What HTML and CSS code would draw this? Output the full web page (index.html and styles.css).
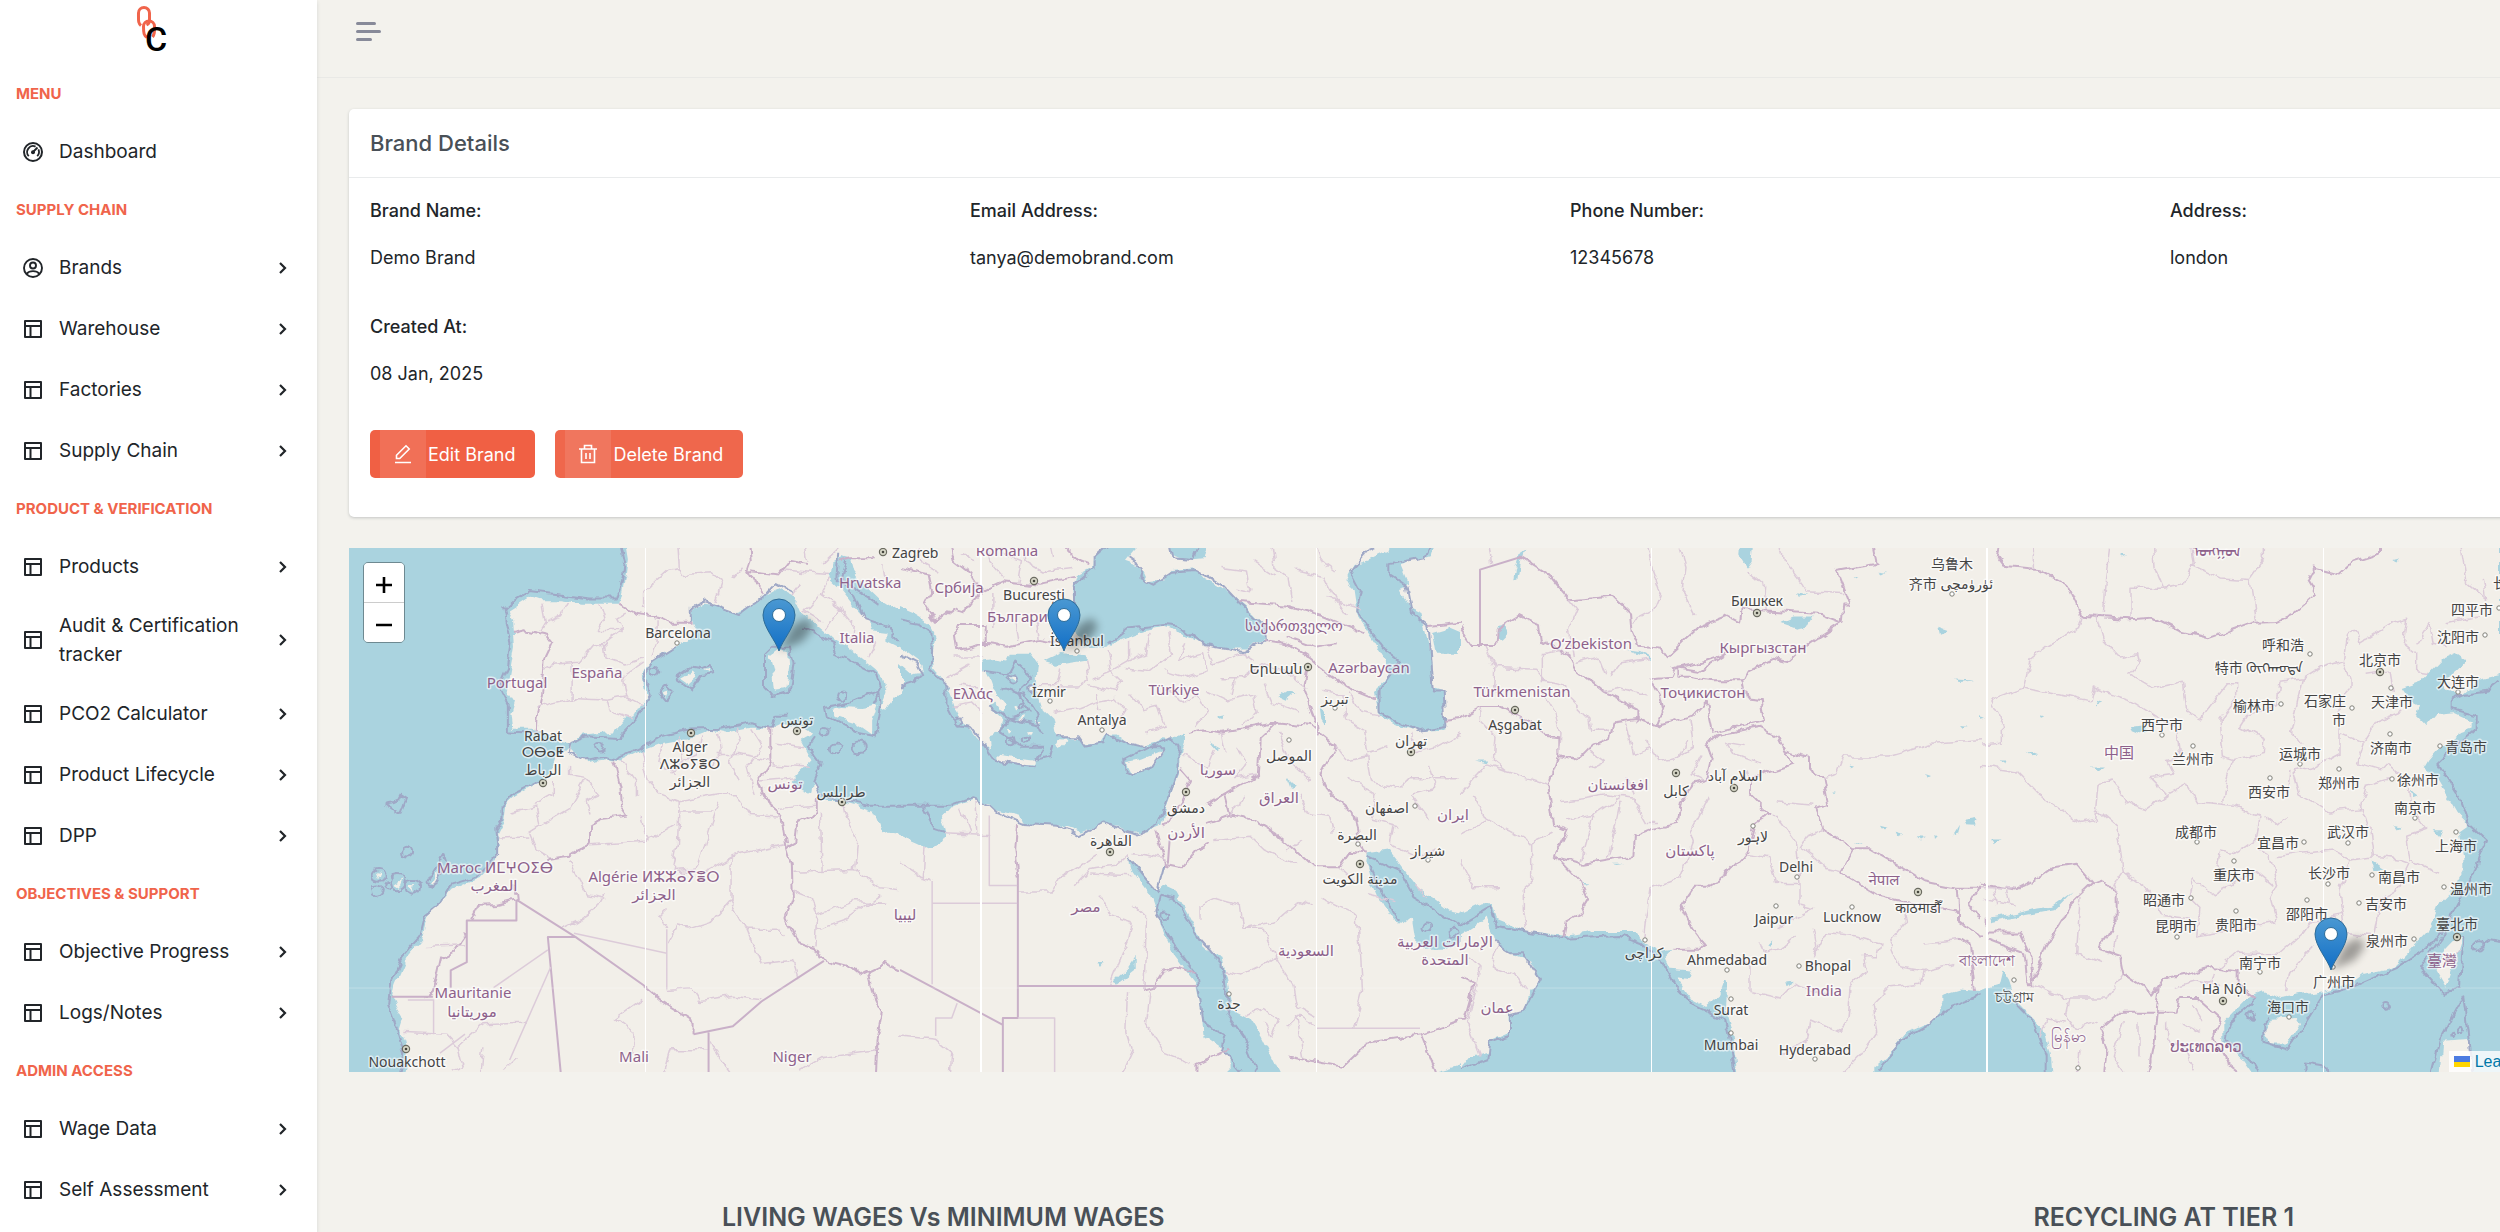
FILE: index.html
```html
<!DOCTYPE html>
<html lang="en">
<head>
<meta charset="utf-8">
<title>Brand Details</title>
<link rel="stylesheet" href="styles.css">
</head>
<body>
<svg class="defs" aria-hidden="true">
  <symbol id="i-layout" viewBox="0 0 24 24"><path d="M4 4h16v16H4zM4 9h16M9.500 9v11" fill="none" stroke="currentColor" stroke-width="2" stroke-linejoin="round"/></symbol>
  <symbol id="i-dash" viewBox="0 0 24 24"><g fill="none" stroke="currentColor"><circle cx="12" cy="12" r="9" stroke-width="2"/><path d="M7.800 16.200A6 6 0 0 1 14.600 6.600M17.400 9.400a6 6 0 0 1-1.200 6.800" stroke-width="1.800"/><path d="M12 12l4.500-4.500" stroke-width="1.800"/></g><circle cx="12" cy="12.200" r="2" fill="currentColor"/></symbol>
  <symbol id="i-user" viewBox="0 0 24 24"><g fill="none" stroke="currentColor" stroke-width="1.900"><circle cx="12" cy="12" r="9"/><circle cx="12" cy="9.500" r="3"/><path d="M5.500 17.800c3-3.600 10-3.600 13 0"/></g></symbol>
  <symbol id="i-chev" viewBox="0 0 12 14"><path d="M3 2l5 5-5 5" fill="none" stroke="currentColor" stroke-width="2.200"/></symbol>
</svg>
<div class="app">
  <aside class="sidebar">
    <a class="logo" href="#" aria-label="Home">
      <svg width="34" height="56" viewBox="0 0 34 56"><g fill="none" stroke="#f0644b" stroke-width="3"><path d="M7 25.500C4 23 4.500 21 4.500 13a5.500 5.500 0 0 1 11 0v7.500c0 2-1 3.500-3 4.500"/><path d="M13 37.500c-3-2-3.500-4-3.500-11a5.500 5.500 0 0 1 11 0c0 6 0 8-2 10.500"/></g><text class="logo-c" x="11" y="51">C</text></svg>
    </a>
    <nav>
      <h2>MENU</h2>
      <ul>
        <li><a href="#"><svg class="ic"><use href="#i-dash"/></svg><span>Dashboard</span></a></li>
      </ul>
      <h2>SUPPLY CHAIN</h2>
      <ul>
        <li><a href="#"><svg class="ic"><use href="#i-user"/></svg><span>Brands</span><svg class="chev"><use href="#i-chev"/></svg></a></li>
        <li><a href="#"><svg class="ic"><use href="#i-layout"/></svg><span>Warehouse</span><svg class="chev"><use href="#i-chev"/></svg></a></li>
        <li><a href="#"><svg class="ic"><use href="#i-layout"/></svg><span>Factories</span><svg class="chev"><use href="#i-chev"/></svg></a></li>
        <li><a href="#"><svg class="ic"><use href="#i-layout"/></svg><span>Supply Chain</span><svg class="chev"><use href="#i-chev"/></svg></a></li>
      </ul>
      <h2>PRODUCT &amp; VERIFICATION</h2>
      <ul>
        <li><a href="#"><svg class="ic"><use href="#i-layout"/></svg><span>Products</span><svg class="chev"><use href="#i-chev"/></svg></a></li>
        <li><a href="#"><svg class="ic"><use href="#i-layout"/></svg><span>Audit &amp; Certification tracker</span><svg class="chev"><use href="#i-chev"/></svg></a></li>
        <li><a href="#"><svg class="ic"><use href="#i-layout"/></svg><span>PCO2 Calculator</span><svg class="chev"><use href="#i-chev"/></svg></a></li>
        <li><a href="#"><svg class="ic"><use href="#i-layout"/></svg><span>Product Lifecycle</span><svg class="chev"><use href="#i-chev"/></svg></a></li>
        <li><a href="#"><svg class="ic"><use href="#i-layout"/></svg><span>DPP</span><svg class="chev"><use href="#i-chev"/></svg></a></li>
      </ul>
      <h2>OBJECTIVES &amp; SUPPORT</h2>
      <ul>
        <li><a href="#"><svg class="ic"><use href="#i-layout"/></svg><span>Objective Progress</span><svg class="chev"><use href="#i-chev"/></svg></a></li>
        <li><a href="#"><svg class="ic"><use href="#i-layout"/></svg><span>Logs/Notes</span><svg class="chev"><use href="#i-chev"/></svg></a></li>
      </ul>
      <h2>ADMIN ACCESS</h2>
      <ul>
        <li><a href="#"><svg class="ic"><use href="#i-layout"/></svg><span>Wage Data</span><svg class="chev"><use href="#i-chev"/></svg></a></li>
        <li><a href="#"><svg class="ic"><use href="#i-layout"/></svg><span>Self Assessment</span><svg class="chev"><use href="#i-chev"/></svg></a></li>
      </ul>
    </nav>
  </aside>
  <div class="content">
    <header class="topbar">
      <button class="burger" type="button" aria-label="Toggle menu"><span></span><span></span><span></span></button>
    </header>
    <main>
      <section class="card">
        <h1>Brand Details</h1>
        <div class="card-body">
          <dl class="fields">
            <div><dt>Brand Name:</dt><dd>Demo Brand</dd></div>
            <div><dt>Email Address:</dt><dd>tanya@demobrand.com</dd></div>
            <div><dt>Phone Number:</dt><dd>12345678</dd></div>
            <div><dt>Address:</dt><dd>london</dd></div>
            <div><dt>Created At:</dt><dd>08 Jan, 2025</dd></div>
          </dl>
          <div class="actions">
            <button class="btn" type="button"><span class="btn-icon"><svg width="20" height="20" viewBox="0 0 20 20" fill="none" stroke="#fff" stroke-width="1.600"><path d="M2 18.500h16M3.500 14.500v-3.200L13 1.800l3.200 3.200-9.500 9.500z"/></svg></span>Edit Brand</button>
            <button class="btn btn-soft" type="button"><span class="btn-icon"><svg width="20" height="20" viewBox="0 0 20 20" fill="none" stroke="#fff" stroke-width="1.600"><path d="M1 5h18M3.500 5v13.500h13V5M6.500 5V1.500h7V5M8 9v6M12 9v6"/></svg></span>Delete Brand</button>
          </div>
        </div>
      </section>

      <section class="map" aria-label="Map">
        <svg class="map-canvas" viewBox="0 0 2410 524" preserveAspectRatio="xMinYMin slice">
          <defs>
            <filter id="rough" x="0" y="0" width="100%" height="100%"><feTurbulence type="fractalNoise" baseFrequency="0.07" numOctaves="3" seed="4" result="n"/><feDisplacementMap in="SourceGraphic" in2="n" scale="9" xChannelSelector="R" yChannelSelector="G"/></filter>
            <filter id="soft" x="-50%" y="-50%" width="200%" height="200%"><feGaussianBlur stdDeviation="4"/></filter>
            <linearGradient id="pinfill" x1="0" y1="0" x2="0" y2="1"><stop offset="0" stop-color="#4a98d2"/><stop offset="1" stop-color="#126fc6"/></linearGradient>
            <g id="pin">
              <path d="M0 0L14-26 28-33 34-24 24-10z" fill="#000" opacity=".35" filter="url(#soft)"/>
              <path d="M0 0C-3-10-16-24-16-36a16 16 0 0 1 32 0C16-24 3-10 0 0z" fill="url(#pinfill)" stroke="#2e6c97" stroke-width="1"/>
              <circle cy="-36" r="6.500" fill="#fff" stroke="#2e6c97" stroke-width="1"/>
            </g>
            <g id="cap"><circle r="3.600" fill="#d8d8c8" stroke="#6b6b60" stroke-width="1.200"/><circle r="1.300" fill="#44443c"/></g>
            <circle id="town" r="2.200" fill="#fff" stroke="#7f7f78" stroke-width="1"/>
          </defs>
          <rect class="sea" x="-10" y="-10" width="2440" height="560"/>
          <g filter="url(#rough)">
            <svg x="-9" y="-8" width="560" height="540" viewBox="0 0 1568 1568" preserveAspectRatio="none">
              <g class="land">
                <path d="M798 0L806 50 800 100 790 150 782 185 730 185 680 185 620 175 560 175 530 165 500 185 470 205 485 230 487 275 490 310 480 370 470 430 465 455 490 465 480 500 485 545 540 545 575 560 610 585 640 590 680 565 740 560 770 555 800 520 825 510 840 480 865 455 850 430 845 395 870 360 910 325 960 300 1000 260 985 225 990 195 1020 185 1060 190 1110 210 1150 195 1190 160 1225 140 1260 160 1285 190 1295 215 1330 245 1380 290 1420 310 1470 350 1500 375 1520 400 1530 440 1515 480 1530 490 1550 460 1570 440V310L1530 290 1530 270 1490 265 1480 235 1440 190 1410 150 1370 110 1375 70 1410 45 1430 50 1440 90 1470 130 1510 170 1570 210V0z"/>
                <path d="M570 700L540 715 490 745 465 770 460 810 440 850 445 890 430 940 395 980 310 1015 275 1060 245 1090 230 1160 185 1215 155 1290 145 1325 160 1360 175 1385 165 1420 180 1450 190 1500 175 1570H1570V855L1540 850 1510 830 1495 790 1440 770 1390 755 1340 755 1325 700 1320 740 1280 720 1265 700 1290 670 1320 640 1300 600 1290 580 1325 560 1300 545 1240 535 1220 545 1150 545 1080 560 1040 550 980 575 900 590 850 610 790 640 750 635 690 645 650 620 640 600 610 630 600 660z"/>
                <path d="M1200 340L1230 315 1255 320 1258 370 1250 430 1215 435 1210 380zM1378 490L1400 485 1460 488 1505 480 1490 530 1490 565 1450 535 1390 515zM955 400L985 382 1000 400 980 418zM903 440L920 434 912 452zM1012 376L1035 376 1030 386zM150 1000L175 985 165 1010zM195 1005L210 1005 205 1025zM255 1000L275 960 278 975 262 1005zM100 968L112 970 107 985z"/>
              </g>
              <path class="mar" d="M785 0L798 60 790 120 775 170 700 170 610 158 530 148 490 172 460 200 470 250 480 300 470 370 445 430 470 480 470 555 530 560 570 550M640 590L635 620 680 640 740 628 780 635 850 600 900 570 980 550 1060 548 1150 532 1210 545 1220 510 1250 510M640 590L690 570 780 575 830 520 870 450 850 400 880 350 940 310M985 240L985 195 1020 178 1120 215 1190 160 1220 125 1265 150M1300 255L1380 300 1390 330 1500 385 1515 430 1490 480M1415 60L1400 110 1470 160 1510 190M1395 40L1390 110 1440 160 1470 230 1530 250 1568 290M1330 570L1310 600 1345 650 1325 700 1340 740 1480 772 1568 772M560 700L490 735 455 775 455 810 435 840 440 880 440 910 390 975 310 1000 275 1060 240 1090 225 1150 175 1210 140 1290 135 1350 160 1420 180 1490 160 1568M1190 330L1210 310 1260 310 1270 360 1260 440 1210 455 1190 430zM1355 485L1440 470 1510 440 1515 480 1500 570 1450 560 1360 510zM940 400L980 370 1010 375 1035 365 1045 390 1010 395 985 435zM895 440L915 420 935 440 915 465zM125 765L160 760 170 740 185 750 170 795zM240 1000L290 915 298 940 260 1010z"/>
              <g class="mar"><circle cx="882" cy="386" r="12"/><circle cx="188" cy="905" r="14"/><circle cx="108" cy="975" r="17"/><circle cx="102" cy="1021" r="15"/><circle cx="133" cy="1003" r="12"/><circle cx="162" cy="992" r="22"/><circle cx="204" cy="1010" r="20"/><circle cx="1355" cy="556" r="13"/><circle cx="1388" cy="608" r="14"/><circle cx="1455" cy="602" r="17"/><circle cx="1405" cy="453" r="13"/><circle cx="728" cy="603" r="11"/></g>
              <path class="bord" d="M782 185L830 215 900 225 930 240 990 240M485 270L520 262 580 275 595 295 570 350 565 430 550 520 548 550M765 640L785 720 790 770 810 800 730 810 700 830 700 880 640 920 580 930M1205 545L1205 640 1170 700 1200 770 1235 800 1250 890 1265 940 1268 1040 1250 1095 1280 1170 1335 1190 1355 1222M1335 755L1335 790 1280 820 1275 880 1250 895M1145 0L1150 60 1140 90 1160 130 1185 155M1140 90L1230 100 1260 60 1310 70M1400 60L1430 50 1500 50M490 1000L495 1045 440 1060 390 1062 370 1104M352 1140L315 1195 280 1215 260 1310 240 1325M850 1295L905 1345 960 1380 990 1400 990 1435M1355 1222L1420 1240 1450 1265 1480 1250 1525 1228 1568 1250M1480 1250L1500 1340 1520 1375 1505 1450 1500 1568"/>
              <path class="reg" d="M565 185L575 240 560 265M640 185L620 220 580 235M725 185L740 230 720 260 790 260 775 230 800 215M790 260L740 300 710 305 670 355 600 360 570 370M740 300L745 340 800 360 850 345M650 360L650 460 610 470 550 485M650 460L750 465 800 455 850 480M750 465L760 500 820 520M800 455L790 400 845 360M885 230L885 300 870 340M850 150L920 85 950 80 960 100 1040 95 1070 120 1050 180M850 150L850 200M950 80L945 0M1100 110L1130 75M1240 90L1370 100M1260 160L1290 120M1340 160L1300 210 1350 240M1370 110L1345 160 1400 200 1360 260M1400 200L1440 250 1430 300M1500 300L1480 340M640 650L640 680 690 690 730 740 690 760 700 800M600 700L600 740 550 770 480 790M550 770L560 830 530 850 550 900 590 925M445 868L530 865M690 690L640 780 560 830M790 640L830 700 830 740M840 610L860 700 900 740 950 760M900 590L890 650 940 680M950 570L960 640 920 680M1010 570L1000 620 960 640M1060 560L1070 620 1040 660M1110 545L1120 590 1090 640 1120 700M1150 550L1180 600 1140 660 1160 740M1205 640L1120 620 1060 620M1220 590L1300 600M1205 650L1310 660M1175 700L1280 690M1225 780L1330 770M950 760L1060 740 1110 740 1150 800 1235 805M950 760L945 880 930 960 1000 955 1040 820 1060 760M950 790L1040 790M700 885L860 875 940 825M840 800L850 850 870 875M940 965L1020 965 1095 920 1245 885M1095 920L1095 1050 1140 1130 1230 1130 1250 1150M1095 1045L1040 1110 980 1130 940 1120 915 1165M740 1030L720 1070 660 1110 620 1130M640 935L690 1030 740 1040M920 1070L895 1095 915 1130M915 1305L985 1300 1010 1340 1100 1325 1180 1335M1140 1130L1180 1230 1270 1220 1285 1270M1345 790L1350 960M1410 760L1415 790 1450 870 1440 960 1270 965M1440 960L1510 1010 1568 1015M1270 1020L1320 1040 1335 1090 1330 1180M1335 1090L1440 1050 1530 1055M235 1180L350 1175M1335 1130L1420 1100 1510 1030M180 1430L300 1435 330 1470 400 1405 520 1400M330 1470L345 1530 310 1545M400 1470L390 1568M500 1500L460 1540M770 1390L850 1330M770 1390L820 1430 820 1490M910 1550L930 1480 1030 1480M1040 1450L1060 1500 1110 1568M1280 1545L1355 1500 1505 1480M1300 0L1310 60M1350 70L1400 20M1520 70L1530 140"/>
            </svg>
            <svg x="551" y="-8" width="560" height="540" viewBox="0 0 1568 1568" preserveAspectRatio="none">
              <rect class="land" x="-5" width="1580" height="1568"/>
              <g class="water">
                <path d="M-5 195L40 215 80 240 100 280 90 330 95 375 130 420 150 470 165 520 195 545 215 575 235 590 255 610 250 570 280 560 290 520 250 480 270 470 290 500 300 480 260 430 250 400 235 370 230 350 265 345 300 350 310 330 370 330 385 350 380 400 385 440 400 490 430 520 440 570 500 575 520 595 560 590 575 565 610 565 640 590 680 600 720 590 740 570 780 575 795 555 795 590 785 620 785 670 765 720 745 780 735 830 700 845 650 850 610 830 560 825 505 850 450 830 345 825 335 800 265 785 250 765 200 755 150 775 120 810 130 850 110 885 80 895 50 880-5 855z"/>
                <path d="M400 350L450 325 520 335 520 350 440 362zM490 200L485 140 495 105 540 80 545 50 590 0 680 0 650 35 630 60 670 75 690 120 740 115 760 90 830 85 850 110 900 140 950 180 990 215 1020 250 1025 285 970 315 900 315 850 305 790 270 740 255 680 265 620 290 580 310 520 315 500 290 485 250zM750 0L870 0 850 50 800 55 755 40z"/>
                <path d="M1270 70L1310 60 1370 30 1380 0 1500 0 1490 40 1430 60 1400 70 1420 120 1400 150 1430 200 1460 215 1490 350 1495 430 1525 440 1530 550 1450 555 1400 540 1340 510 1330 440 1340 420 1365 400 1360 350 1330 300 1280 220 1270 150 1250 110zM1490 270L1540 255 1575 270 1575 330 1500 330z"/>
                <path d="M640 920L660 940 720 1020 740 1000 770 1015 810 1090 840 1150 850 1185 900 1210 915 1280 925 1360 980 1390 1010 1440 1070 1568 920 1568 920 1510 905 1480 850 1440 845 1380 830 1290 770 1210 730 1120 700 1030 650 960zM1310 910L1370 900 1400 940 1450 1010 1500 1040 1550 1080 1575 1085 1575 1170 1520 1190 1470 1190 1440 1160 1430 1095 1400 1120 1380 1100 1340 1040 1320 990 1305 940zM1500 1545L1575 1520V1568H1490z"/>
                <path d="M1060 460L1090 440 1110 445 1080 470zM1175 480L1190 500 1190 535 1180 520zM1085 690L1105 710 1095 720zM550 1225L570 1225 560 1240zM600 1280L640 1240 660 1210 660 1245 610 1285zM890 510L915 505 895 520zM870 590L895 605 885 610z"/>
              </g>
              <path class="land" d="M-5 310L60 360 65 385 40 390-5 350zM-5 395L12 420-5 445zM270 625L330 635 380 640 380 655 300 650 270 640zM630 645L680 635 740 610 710 655 670 675 645 675zM440 590L460 572 467 582 447 605zM300 400L320 395 315 410zM360 420L375 425 365 440zM330 520L350 515 345 530zM300 545L315 550 305 560zM350 560L370 555 365 570zM380 520L400 525 390 535zM320 480L335 485 325 495z"/>
              <path class="mar" d="M-5 230L50 240 85 270 90 320 85 380 130 420 130 480 160 540 200 545 240 600 265 640 310 650 380 660M-5 330L50 360 65 390 40 415-5 430M440 570L500 570 520 600 570 590 580 560 640 590 700 605 760 570 780 600 780 670 740 780 720 830 660 855 570 820 500 860 440 830 345 825 270 790 250 770 200 750 140 772-5 772M625 640L690 605 740 605 700 665 650 680 630 670zM65 775L95 835 125 845M490 190L490 130 545 80 545 50 600 0M590 300L640 260 740 250 790 255 850 305 960 325 1025 290 1020 250 950 185 900 130 830 90 760 95 710 130 670 110 680 80 640 50M750 0L760 50 820 55 840 0M1380 0L1310 30 1260 90 1290 150 1280 210 1350 310 1400 350 1340 440 1340 500 1450 555 1530 540 1525 440 1495 440 1480 250 1430 210 1415 130 1370 100 1370 70 1470 50 1490 0M640 920L720 1020 740 940M725 1030L715 1080 770 1180 830 1260 850 1400 910 1440 900 1480 950 1540M725 1030L770 1040 840 1160 900 1230 920 1380 960 1440 1010 1568M1310 920L1400 960 1440 1040 1568 1120M1310 940L1350 1030 1400 1110M240 380L300 390 320 350 370 400 330 440 360 500 300 520 280 560 340 600 400 600 380 640 420 630 430 590M290 430L350 450 380 500 400 560M250 480L310 520 400 540"/>
              <g class="mar"><circle cx="740" cy="1090" r="11"/><circle cx="1474" cy="1122" r="11"/><circle cx="165" cy="530" r="12"/><circle cx="342" cy="483" r="7"/><circle cx="310" cy="585" r="11"/><circle cx="350" cy="580" r="9"/><circle cx="310" cy="405" r="12"/><circle cx="370" cy="430" r="11"/><circle cx="1550" cy="1140" r="11"/></g>
              <path class="bord" d="M-5 80L80 100 90 150 70 190 100 240 150 200 180 210 200 180 230 150 200 100 150 60 140 0M150 250L240 250 240 300 160 320 150 250M230 300L300 310 390 290 440 300M230 150L290 120 390 130 490 110M460 0L480 50 530 70M810 560L850 550 900 560 960 550 1060 530 1150 540 1220 600 1180 680 1200 730 1270 790 1285 870 1300 910M1140 380L1130 430 1160 510 1170 570M1020 290L1080 300 1140 340 1200 390 1260 430 1330 460M950 180L1080 190 1180 220 1300 270M1080 280L1160 310 1220 300M1060 530L1010 580 1005 680 860 770M790 670L815 700 790 760 740 830M910 740L925 800 860 825M925 800L980 810 1060 860 1160 950 1230 950 1260 905 1310 910M870 880L830 900 790 950 745 940 720 845M680 1310L710 1300 740 1250 780 1240 830 1260M325 825L320 900 330 980M1090 1500L1240 1530 1310 1460 1460 1435 1568 1395M1460 1435L1510 1568M830 1568L830 1525 920 1480M1480 250L1568 240M1530 525L1568 520"/>
              <path class="reg" d="M50 0L60 60 110 90M240 0L250 60 290 110M290 40L340 60 330 120M340 0L350 60 400 90 480 80M420 0L430 50M170 40L210 60M260 160L260 250M320 230L330 290M380 230L390 290M150 340L230 340M130 400L200 360M160 420L220 430M230 500L200 470 150 480M450 370L440 420 380 420M520 350L530 410 500 430 440 430M580 320L590 380 540 400M640 290L640 350 590 380 620 410 600 440 530 420M700 270L690 330 640 350M750 270L760 330 700 380 630 370M800 300L780 350 850 330 860 380 800 400 740 380M860 310L880 360 960 330 990 350M900 400L960 400 1020 360 1080 380 1140 430M430 500L500 490 550 470 600 460 630 490 600 540M550 440L560 500M640 440L680 490 720 480 740 540 690 560M740 430L800 470 830 450 860 500 830 540M860 440L920 470 990 450 1000 500 960 540M940 400L930 450M1020 420L1040 470 1120 500M900 80L970 90 980 150 940 140M1040 0L1050 80 1090 110 1100 180M990 60L1050 100M1110 90L1190 110 1220 170 1250 220M1220 90L1180 60 1160 0M1200 170L1290 200M880 610L860 660 790 620M940 600L970 650 940 690 1000 680M900 560L910 620M1060 560L1090 640 1150 700M1180 440L1240 450 1250 520 1300 550 1310 620 1370 600M1260 440L1290 500 1340 510M1220 600L1250 640 1310 630 1320 700 1400 720 1430 690 1568 690M1250 690L1330 740 1320 810 1390 830M1430 560L1440 620 1500 600 1568 560M1480 650L1500 720 1430 740 1480 810M1380 830L1370 880 1450 920 1500 900M1120 740L1140 790 1200 800 1210 850M925 800L960 740M1120 870L1080 900M880 870L980 860 1020 900 1110 940M840 1100L840 1060 880 1040 950 1060 960 1130 1050 1110 1120 1050 1150 1060M960 1130L1020 1130 1050 1210 1100 1290 1110 1350 1160 1380M905 1250L960 1260 1020 1230 1050 1210M970 1380L1020 1360 1060 1390 1040 1440 1020 1400M1080 1420L1120 1380 1160 1410M1110 1380L1130 1500M1175 1040L1280 1090 1290 1210 1295 1310 1270 1415M1440 1000L1480 1040M1310 1030L1390 1050M0 940L60 980 90 990M70 890L65 985M120 850L250 855M210 760L215 850M170 780L195 850M330 1022L430 1022 450 980 560 910M485 1010L530 960 600 950 640 910M530 970L650 975M560 1030L590 1090 650 1110 640 1160 590 1290M650 1060L690 1100 683 1310M640 1310L635 1430 650 1480 610 1568M700 1310L690 1410 740 1490 810 1520M0 1440L100 1450 145 1490 140 1568M650 910L750 930M1280 1000L1230 950"/>
            </svg>
            <svg x="1111" y="-8" width="520" height="540" viewBox="0 0 1560 1568" preserveAspectRatio="none">
              <rect class="land" x="-5" width="1570" height="1568"/>
              <g class="water">
                <path d="M-5 1085L60 1055 95 1055 110 1100 200 1135 320 1150 400 1135 530 1135 545 1165 600 1195 640 1190 615 1215 630 1245 700 1250 690 1275 650 1270 690 1330 740 1355 780 1320 795 1280 805 1290 800 1370 815 1420 835 1568-5 1568-5 1545 30 1500 85 1485 90 1455 150 1430 145 1380 190 1370 205 1320 240 1275 210 1220 150 1200 100 1170 80 1095 60 1110-5 1150zM1240 1568L1240 1530 1300 1480 1340 1430 1420 1395 1450 1340 1450 1320 1500 1305 1565 1310 1565 1568z"/>
                <path d="M965 240L1000 225 1055 225 1040 250 1010 255zM110 250L135 245 145 270 125 290 108 275zM160 120L165 80 180 40 205 25 180 60 172 118zM840 0H880L875 60 860 80 838 45zM505 320L540 325 580 345 570 345zM1435 255L1465 265 1440 275zM1005 152L1050 158 1010 162zM45 640L85 640 80 648zM1515 815L1550 810 1545 830 1520 828zM1260 830L1280 835 1265 838zM1370 860L1395 862 1380 870zM1480 860L1500 830 1495 855zM1500 540L1520 542 1508 548zM1485 405L1540 408 1500 412zM1175 108L1195 108 1185 115zM1255 92L1275 95 1265 100zM1120 730L1130 730 1125 735zM1395 680L1410 685 1400 690zM1170 652L1185 655 1178 660zM975 1282L992 1280 983 1292zM925 1180L940 1165 935 1185zM365 998L390 1000 375 1004zM455 940L490 940 470 944zM1185 875L1205 875 1195 880zM1310 850L1330 855 1315 860zM1420 855L1430 860 1422 868z"/>
              </g>
              <path class="mar" d="M-5 1120L90 1065 110 1120 320 1158 480 1150 540 1170 600 1220 640 1290 700 1350 795 1395 815 1480 830 1568M100 1170L150 1200 190 1200 240 1275 190 1370 150 1380 150 1440 90 1460 85 1510-5 1540M1565 1320L1460 1360 1400 1410 1330 1450 1250 1540"/>
              <path class="bord" d="M-5 250L35 305 105 305 110 260 150 235 175 220 240 250 245 290 330 340 350 380 430 440 535 490 535 530M180 50L270 105 330 175 460 165 510 210 515 265 535 310 600 315 620 340 720 250 800 220 840 240 845 200 1080 215 1145 240 1150 190 1170 190 1130 90 1250 70 1235 0M1145 240L1040 305 985 355 940 345 865 380 850 410 760 410 690 400 655 400 655 370 720 380 800 330 740 350 640 375 630 400 575 405 600 450 610 490 590 540 700 510 740 470 760 560 915 525 905 465 860 460 850 410M-5 520L60 485 120 485 210 530 250 565 295 570 295 630 345 640 380 605 450 575 460 530 530 520 600 545M295 630L265 710 280 830 320 845 285 915 360 990 385 1045 360 1085 320 1105 310 1155M285 920L370 940 520 915 525 860 575 840 650 825 660 760 700 710 740 700 755 640 740 600 770 570 900 545 950 570 970 610 1050 630 1050 670 1090 690 1105 770 1065 780 1090 840 1180 895 1230 895 1310 940 1390 990 1490 1010 1495 1080 1370 1055 1250 1030 1140 965 1180 895M970 610L1000 650 900 680 870 700 870 740 925 795 885 820 865 900 800 970 740 1010 700 1010 665 1060 700 1130 735 1175 720 1190 640 1190M1490 1010L1560 1010M1500 1080L1500 1110 1560 1150M1560 1100L1530 1060 1560 1010M1500 1160L1530 1180 1545 1310M-5 1265L45 1290 15 1390-5 1390"/>
              <path class="reg" d="M85 0L95 70M560 0L575 80 600 150 575 210 515 240M650 0L675 80 665 150 700 215M860 90L920 140 915 200M960 0L970 60 1040 150 1150 155M330 175L350 200 325 260 340 340M75 310L105 370 230 375 255 405 320 420 330 460 390 520 395 555 445 555M250 410L250 330 300 320M450 400L480 360 570 345M430 440L480 430 560 450M340 360L420 340 440 390M105 370L100 440M250 440L285 500 300 560 295 620M60 485L65 530 105 570 100 640 140 670 210 690 270 710M0 740L80 650 140 670M80 810L40 740M80 810L215 880 215 990 190 1010 190 1080 200 1130M0 855L80 815M215 880L280 850M0 930L40 1010 120 1010M380 605L430 640 390 660M500 530L520 620 570 600M560 580L590 640 660 630 680 580M690 520L700 600 640 640M720 620L690 680 730 700M300 760L380 750 440 740 520 750 560 820 600 820M320 810L400 800 480 750M400 800L360 935M480 760L445 920M500 690L520 740M860 600L800 590 820 620 900 650M750 740L690 850 700 880 660 980 570 1010 560 1080 550 1160M860 665L870 700M860 910L930 920 950 1000 1020 1000 1010 880 950 800 930 800M1020 890L1100 950 1140 960M1020 1000L1020 1060 1060 1070 950 1120M1090 840L1040 860 1020 890M950 760L1060 770M1060 1130L1070 1180 1060 1210 1100 1140 1190 1150 1260 1170 1250 1210 1210 1210 1220 1250 1170 1300 1160 1400 1140 1430 1050 1390 1040 1450 960 1500M900 1160L910 1200 960 1190 1010 1150M870 1240L870 1310 960 1330 1000 1290 1100 1320M810 1200L870 1240M1290 1170L1340 1110 1330 1060M1290 1170L1320 1240 1390 1250 1380 1290 1290 1300 1240 1350 1250 1430 1200 1500 1130 1568M1390 1170L1500 1160M1390 1250L1480 1230M1090 690L1130 680 1150 630 1280 630 1420 590 1560 580M30 1210L60 1240 50 1300 20 1400 60 1500M110 1180L100 1240 160 1260 200 1310"/>
            </svg>
            <svg x="1631" y="-8" width="520" height="540" viewBox="0 0 1560 1568" preserveAspectRatio="none">
              <rect class="land" x="-5" width="1575" height="1568"/>
              <g class="water">
                <path d="M-5 1310L60 1290 70 1250 90 1280 110 1340 150 1380 190 1420 210 1500 215 1568-5 1568zM1570 390L1500 405 1440 455 1410 440 1385 415 1430 380 1460 350 1430 328 1390 345 1350 385 1325 410 1265 430 1290 465 1320 480 1310 510 1340 540 1370 505 1420 500 1475 525 1475 550 1430 565 1380 600 1345 640 1330 665 1370 690 1400 740 1430 790 1470 830 1440 850 1450 920 1450 960 1420 1010 1380 1050 1360 1100 1340 1140 1290 1190 1240 1240 1150 1260 1110 1290 1030 1310 970 1320 900 1330 850 1310 800 1330 760 1370 730 1400 730 1450 780 1500 830 1568 1570 1568z"/>
                <path d="M450 540L490 535 500 555 480 565 455 555zM350 470L370 475 355 480zM335 655L375 655 360 665zM30 870L65 870 40 882zM175 515L190 518 180 522zM140 612L175 625 160 628zM0 515L15 518 0 522zM1355 840L1385 840 1375 860zM1240 825L1265 828 1250 838zM1175 930L1215 955 1180 955zM1290 730L1310 745 1295 750zM420 45L438 48 425 54zM1240 55L1260 50 1250 62zM60 640L80 640 75 650z"/>
                <path d="M30 1100L110 1085 170 1070 210 1065 275 1020 220 1075 110 1095 30 1110z"/>
              </g>
              <path class="land" d="M850 1430L880 1390 950 1385 960 1400 920 1465 870 1465zM1430 1150L1445 1155 1400 1300 1370 1250 1390 1190zM1390 1460L1465 1455 1480 1568 1380 1568z"/>
              <path class="mar" d="M1560 410L1520 440 1450 450 1415 465 1415 490 1490 510 1490 550 1440 590 1375 650 1440 750 1470 830 1515 870 1480 970 1400 1120 1350 1180 1250 1240 1110 1300 1030 1320 960 1430 920 1480 850 1460 850 1410 870 1390M830 1330L800 1360 750 1400 740 1450 830 1530 850 1568M1350 1568L1380 1450 1450 1325 1480 1568M1395 1140L1320 1240 1390 1315 1440 1300 1450 1150M970 1568L975 1520 1040 1530 1045 1568M1490 1190L1530 1165 1560 1170M100 1340L160 1400 200 1500 200 1568"/>
              <g class="mar"><circle cx="1217" cy="1357" r="10"/><circle cx="815" cy="1383" r="10"/><circle cx="1496" cy="1180" r="12"/><circle cx="1440" cy="1420" r="9"/><circle cx="1420" cy="1440" r="6"/></g>
              <path class="bord" d="M60 0L50 50 70 75 180 85 265 130 305 220 450 230 520 225 600 265 690 285 820 240 890 238 940 215 1005 160 980 120 1000 80 1080 100 1120 65 1200 40 1200 0M-5 1000L110 1015 160 990 220 950 290 940 340 995 370 985 410 1030 410 1110 360 1190 420 1210 430 1260 520 1320 550 1275 620 1260 700 1240 770 1250 770 1290 830 1330M540 1290L530 1370 590 1370 600 1330 650 1330 720 1390 700 1440 740 1520 800 1568M20 1100L20 1140 120 1140 150 1200 160 1290 140 1290 130 1200 20 1160M340 995L270 1060 250 1100 200 1180 160 1280M520 1370L420 1370 360 1420 380 1480 370 1568M530 1370L520 1470 500 1568"/>
              <path class="reg" d="M160 0L160 80M395 0L380 110 370 215M520 0L525 80 550 140M635 70L610 130 550 140 450 140 450 225M635 70L720 110 810 115 850 60 850 0M810 115L830 235M630 0L640 70M1440 0L1460 120 1520 170 1510 110M300 220L290 260 200 310 150 350 130 430 30 465 70 540 70 590 0 595M350 220L370 290 420 340 470 330 475 360 450 390 520 430 610 410 620 500 660 520 740 420 770 420 770 460 720 520 730 630 760 640M130 430L240 450 330 470 340 430 450 465 590 550 600 630 560 640 580 680 510 690 560 740 620 710 650 760 760 770 840 800 830 870 770 910 720 900 710 940 760 980M0 655L110 670 180 740 300 820 350 810 360 710 400 700 440 760 500 780 560 740M350 780L410 830 430 960 500 1010 550 1090 630 1100M430 960L400 1000 410 1030M640 980L630 1040 660 1070 650 1150 770 1130 890 1110 870 1040 890 1000 870 920 830 900M640 980L700 1030 760 1000 830 960 880 1000M720 1240L770 1200 900 1200 960 1150 990 1110M920 1310L930 1250 1000 1180M990 1110L1090 1090 1080 1020 1110 930 1060 900 960 910 890 920M1110 930L1180 920 1170 840 1150 780 1050 790 960 740 940 670 1000 660 1080 620 1080 560M760 640L850 620 855 580 780 540 800 510 890 480 900 410 970 400 1020 370 1090 350 1110 400 1110 430 1080 460 1080 560 1150 590 1190 530 1270 500M730 770L740 700 760 640M920 800L890 830 850 800M920 740L930 670M970 400L935 560 970 600M1090 350L1100 270 1130 265 1140 300 1240 240 1280 230 1270 300 1310 330 1310 380 1350 385M1160 390L1230 380 1240 440M1310 300L1350 240 1360 300 1400 310M1400 240L1500 220M1150 590L1130 650 1200 670 1220 650 1260 680M1230 690L1160 710 1140 780M1280 700L1290 780 1340 840 1280 860 1290 930 1380 970M1180 920L1260 930 1290 940 1250 1020 1200 1050 1180 1150 1100 1140 1090 1090M1440 1190L1400 1230M0 1010L110 1010M10 1040L110 1060M40 1010L50 1060M80 1015L90 1060M300 1040L290 1200 370 1230M400 1200L410 1150M430 1260L380 1330 250 1330 160 1290M270 1330L260 1380 290 1420 350 1400M180 1440L200 1390 260 1400M300 1480L290 1568M430 1400L400 1500 450 1568M480 1400L480 1500M560 1400L560 1450 610 1470 640 1540M600 1400L660 1430M640 1350L670 1400M580 1300L650 1280 720 1300M700 1260L690 1300"/>
            </svg>
          </g>
          <g class="straight">
            <svg x="-9" y="-8" width="560" height="540" viewBox="0 0 1568 1568" preserveAspectRatio="none">
              <path class="bord" d="M494 1045V1105H355V1226L310 1250V1300M145 1326H260M495 1045L660 1153H582L620 1568M660 1153L860 1300M990 1435L1100 1412 1180 1340 1355 1222M1032 1430V1568"/>
              <path class="reg" d="M582 1190L430 1300M590 1240L475 1510M190 1336H262V1435M655 1142L915 1200M915 1130V1305M280 1490L350 1435"/>
            </svg>
            <svg x="551" y="-8" width="560" height="540" viewBox="0 0 1568 1568" preserveAspectRatio="none">
              <path class="bord" d="M330 970V1388H288V1568M330 1295H830M0 1248L288 1408M750 940L755 870"/>
              <path class="reg" d="M250 800V1003H328M90 990V1290M90 1055H328M160 1345L145 1388H100V1440M330 1388H433V1568M1166 1418H1456"/>
            </svg>
            <svg x="1111" y="-8" width="520" height="540" viewBox="0 0 1560 1568" preserveAspectRatio="none"><path class="bord" d="M60 303V86L180 50"/></svg>
          </g>
          <path class="seam" d="M296.500 0V524M967.500 0V524M1302.500 0V524M1974.500 0V524"/>
          <path class="seam wide" d="M632 0V524M1638 0V524"/>
          <path class="seam-h" d="M0 440H2410"/>

          <g class="country">
            <text x="248" y="130">España</text><text x="168" y="140">Portugal</text><text x="508" y="95">Italia</text><text class="start" x="490" y="40">Hrvatska</text><text x="436" y="241">تونس</text><text x="146" y="325">Maroc ⵍⵎⵖⵔⵉⴱ</text><text x="145" y="343">المغرب</text><text x="305" y="334">Algérie ⵍⵣⵣⴰⵢⴻⵔ</text><text x="305" y="352">الجزائر</text><text x="124" y="450">Mauritanie</text><text x="123" y="469">موريتانيا</text><text x="285" y="514">Mali</text><text x="443" y="514">Niger</text>
            <text x="658" y="8">Romania</text><text x="610" y="45">Србија</text><text class="start" x="638" y="74">България</text><text x="624" y="151">Ελλάς</text><text x="825" y="147">Türkiye</text><text x="945" y="83">საქართველო</text><text x="1020" y="125">Azərbaycan</text><text x="869" y="227">سوريا</text><text x="930" y="255">العراق</text><text x="837" y="290">الأردن</text><text x="737" y="364">مصر</text><text x="556" y="372">ليبيا</text><text x="957" y="408">السعودية</text><text x="1096" y="399">الإمارات العربية</text><text x="1096" y="417">المتحدة</text><text x="1104" y="272">ایران</text>
            <text x="1242" y="101">Oʻzbekiston</text><text x="1414" y="105">Кыргызстан</text><text x="1173" y="149">Türkmenistan</text><text x="1354" y="150">Тоҷикистон</text><text x="1269" y="242">افغانستان</text><text x="1341" y="308">پاکستان</text><text x="1535" y="337">नेपाल</text><text x="1475" y="448">India</text><text x="1638" y="418">বাংলাদেশ</text><text x="1148" y="465">عمان</text>
            <text x="1868" y="9">ᠮᠣᠩᠭᠣᠯ</text><text x="1770" y="210">中国</text><text x="2093" y="418">臺灣</text><text x="1719" y="494">မြန်မာ</text><text x="1857" y="504">ປະເທດລາວ</text>
          </g>
          <g>
            <use href="#cap" x="194" y="235"/><use href="#cap" x="342" y="185"/><use href="#cap" x="448" y="183"/><use href="#cap" x="493" y="254"/><use href="#cap" x="57" y="501"/><use href="#cap" x="534" y="4"/><use href="#cap" x="685" y="33"/><use href="#cap" x="959" y="119"/><use href="#cap" x="1062" y="204"/><use href="#cap" x="837" y="244"/><use href="#cap" x="761" y="304"/><use href="#cap" x="1011" y="316"/><use href="#cap" x="1408" y="65"/><use href="#cap" x="1166" y="162"/><use href="#cap" x="1327" y="225"/><use href="#cap" x="1385" y="240"/><use href="#cap" x="1569" y="344"/><use href="#cap" x="2031" y="124"/><use href="#cap" x="2108" y="389"/><use href="#cap" x="1874" y="453"/>
            <use href="#town" x="328" y="95"/><use href="#town" x="728" y="103"/><use href="#town" x="701" y="153"/><use href="#town" x="753" y="182"/><use href="#town" x="986" y="160"/><use href="#town" x="940" y="192"/><use href="#town" x="1066" y="258"/><use href="#town" x="1009" y="296"/><use href="#town" x="1079" y="312"/><use href="#town" x="880" y="446"/><use href="#town" x="1603" y="46"/><use href="#town" x="1404" y="278"/><use href="#town" x="1448" y="329"/><use href="#town" x="1427" y="358"/><use href="#town" x="1503" y="359"/><use href="#town" x="1296" y="392"/><use href="#town" x="1378" y="422"/><use href="#town" x="1450" y="418"/><use href="#town" x="1382" y="451"/><use href="#town" x="1382" y="485"/><use href="#town" x="1466" y="511"/>
            <use href="#town" x="1961" y="106"/><use href="#town" x="2136" y="87"/><use href="#town" x="2109" y="144"/><use href="#town" x="2003" y="160"/><use href="#town" x="2042" y="140"/><use href="#town" x="1932" y="156"/><use href="#town" x="1813" y="187"/><use href="#town" x="1844" y="198"/><use href="#town" x="2041" y="186"/><use href="#town" x="2091" y="198"/><use href="#town" x="1951" y="216"/><use href="#town" x="2043" y="231"/><use href="#town" x="1990" y="221"/><use href="#town" x="1921" y="230"/><use href="#town" x="2066" y="270"/><use href="#town" x="1848" y="294"/><use href="#town" x="1999" y="295"/><use href="#town" x="1955" y="294"/><use href="#town" x="2107" y="284"/><use href="#town" x="1885" y="313"/><use href="#town" x="1979" y="336"/><use href="#town" x="2023" y="327"/><use href="#town" x="2095" y="339"/><use href="#town" x="1842" y="350"/><use href="#town" x="2010" y="355"/><use href="#town" x="1958" y="352"/><use href="#town" x="1828" y="389"/><use href="#town" x="1887" y="363"/><use href="#town" x="2065" y="391"/><use href="#town" x="1911" y="424"/><use href="#town" x="1665" y="432"/><use href="#town" x="1940" y="469"/><use href="#town" x="1729" y="520"/><use href="#town" x="1984" y="419"/><use href="#town" x="2150" y="60"/>
          </g>
          <g class="city">
            <text x="329" y="90">Barcelona</text><text x="194" y="193">Rabat</text><text x="194" y="209">ⵔⴱⴰⵟ</text><text x="194" y="227">الرباط</text><text x="341" y="204">Alger</text><text x="341" y="221">ⴷⵣⴰⵢⴻⵔ</text><text x="341" y="239">الجزائر</text><text x="448" y="177">تونس</text><text x="492" y="249">طرابلس</text><text x="58" y="519">Nouakchott</text><text class="start" x="543" y="10">Zagreb</text>
            <text x="685" y="52">București</text><text x="728" y="98">İstanbul</text><text x="700" y="149">İzmir</text><text x="753" y="177">Antalya</text><text x="927" y="126">Երևան</text><text x="986" y="156">تبریز</text><text x="1062" y="198">تهران</text><text x="940" y="213">الموصل</text><text x="837" y="265">دمشق</text><text x="1038" y="265">اصفهان</text><text x="1008" y="292">البصرة</text><text x="762" y="298">القاهرة</text><text x="1079" y="308">شیراز</text><text x="1011" y="336">مدينة الكويت</text><text x="880" y="461">جدة</text>
            <text x="1408" y="58">Бишкек</text><text x="1603" y="21">乌鲁木</text><text x="1602" y="41">齐市 ئۈرۈمچى</text><text x="1166" y="182">Aşgabat</text><text x="1327" y="248">کابل</text><text x="1386" y="233">اسلام آباد</text><text x="1404" y="294">لاہور</text><text x="1447" y="324">Delhi</text><text x="1569" y="365">काठमाडौँ</text><text x="1425" y="376">Jaipur</text><text x="1503" y="374">Lucknow</text><text x="1295" y="410">کراچی</text><text x="1378" y="417">Ahmedabad</text><text x="1479" y="423">Bhopal</text><text x="1382" y="467">Surat</text><text x="1382" y="502">Mumbai</text><text x="1466" y="507">Hyderabad</text>
            <text x="1934" y="102">呼和浩</text><text x="1910" y="125">特市 ᠬᠥᠬᠡᠬᠣᠲᠠ</text><text x="2031" y="117">北京市</text><text x="2123" y="67">四平市</text><text x="2109" y="94">沈阳市</text><text x="2109" y="139">大连市</text><text x="1976" y="158">石家庄</text><text x="1990" y="177">市</text><text x="2043" y="159">天津市</text><text x="1905" y="163">榆林市</text><text x="1813" y="182">西宁市</text><text x="1844" y="216">兰州市</text><text x="2042" y="205">济南市</text><text x="2117" y="204">青岛市</text><text x="1951" y="211">运城市</text><text x="2069" y="237">徐州市</text><text x="1990" y="240">郑州市</text><text x="1920" y="249">西安市</text><text x="2066" y="265">南京市</text><text x="1847" y="289">成都市</text><text x="1999" y="289">武汉市</text><text x="1929" y="300">宜昌市</text><text x="2107" y="303">上海市</text><text x="1885" y="332">重庆市</text><text x="1980" y="330">长沙市</text><text x="2050" y="334">南昌市</text><text x="2122" y="346">温州市</text><text x="1815" y="357">昭通市</text><text x="2037" y="361">吉安市</text><text x="1958" y="371">邵阳市</text><text x="1827" y="383">昆明市</text><text x="1887" y="382">贵阳市</text><text x="2108" y="381">臺北市</text><text x="2038" y="398">泉州市</text><text x="1911" y="420">南宁市</text><text x="1985" y="439">广州市</text><text x="1875" y="446">Hà Nội</text><text x="1665" y="454">চট্টগ্রাম</text><text x="1939" y="464">海口市</text><text class="start" x="2144" y="40">长春市</text>
          </g>
          <use href="#pin" x="430" y="103"/><use href="#pin" x="715" y="103"/><use href="#pin" x="1982" y="422"/>
        </svg>
        <div class="zoom">
          <button type="button" aria-label="Zoom in"><svg width="16" height="16" viewBox="0 0 16 16"><path d="M0 8h16M8 0v16" stroke="#000" stroke-width="2.600"/></svg></button>
          <button type="button" aria-label="Zoom out"><svg width="16" height="16" viewBox="0 0 16 16"><path d="M0 8h16" stroke="#000" stroke-width="2.600"/></svg></button>
        </div>
        <div class="attribution"><a href="#"><svg width="16" height="11" viewBox="0 0 16 11"><path fill="#4c7be1" d="M0 0h16v6H0z"/><path fill="#ffd500" d="M0 6h16v5H0z"/></svg> Leaflet</a> | © <a href="#">OpenStreetMap</a> contributors</div>
      </section>

      <section class="charts">
        <h2>LIVING WAGES Vs MINIMUM WAGES</h2>
        <h2>RECYCLING AT TIER 1</h2>
      </section>
    </main>
  </div>
</div>
</body>
</html>
```
FILE: styles.css
```css
* { box-sizing: border-box; }
html, body { margin: 0; height: 100%; overflow: hidden; }
body {
  background: #f3f2ed;
  color: #212529;
  font-family: Inter, "Liberation Sans", sans-serif;
  font-size: 18px;
}
h1, h2, ul, dl, dd { margin: 0; padding: 0; }
a { color: inherit; text-decoration: none; }
button { font: inherit; cursor: pointer; }
svg { display: block; }
.defs { position: absolute; width: 0; height: 0; }

.app { display: flex; height: 100vh; overflow: hidden; }

/* Sidebar */
.sidebar {
  flex: none;
  width: 317px;
  background: #fff;
  box-shadow: 0 2px 4px rgba(15, 34, 58, .12);
  z-index: 1;
}
.logo { display: flex; justify-content: center; height: 66px; }
.logo svg { margin-right: 16px; }
.logo-c { font: 500 34px Roboto, sans-serif; fill: #000; }
.sidebar h2 {
  height: 55px;
  padding: 0 16px;
  color: #f0644b;
  font-size: 15px;
  font-weight: 700;
  line-height: 55px;
}
.sidebar ul { list-style: none; }
.sidebar li a {
  display: flex;
  align-items: center;
  gap: 14px;
  min-height: 61px;
  padding: 14px 28px 14px 21px;
  font-size: 19px;
  line-height: 29px;
}
.sidebar li span { flex: 1; }
.ic { flex: none; width: 24px; height: 24px; }
.chev { flex: none; width: 12px; height: 14px; }

/* Content runs wider than the space left by the sidebar */
.content { flex: none; width: calc(100vw - 27px); }
.topbar {
  display: flex;
  align-items: center;
  height: 78px;
  padding: 0 39px 14px;
  border-bottom: 1px solid #e9e9e6;
}
.burger {
  display: flex;
  flex-direction: column;
  gap: 5px;
  width: 26px;
  padding: 0;
  border: 0;
  background: none;
}
.burger span { width: 20px; height: 3px; border-radius: 2px; background: #878a99; }
.burger span:nth-child(2) { width: 25px; }
.burger span:nth-child(3) { width: 16px; }

main { padding: 31px 32px 0; }
.card {
  background: #fff;
  border-radius: 5px;
  box-shadow: 0 1px 3px rgba(56, 65, 74, .25);
}
.card h1 {
  padding: 0 21px;
  border-bottom: 1px solid #e9ebec;
  color: #495057;
  font-size: 22px;
  font-weight: 500;
  line-height: 68px;
}
.card-body { padding: 20px 21px 39px; }
.fields {
  display: grid;
  grid-template-columns: repeat(4, 1fr);
  column-gap: 11px;
  row-gap: 22px;
  margin-right: -22px;
}
.fields div { height: 94px; }
.fields dt { margin-bottom: 21px; font-weight: 500; line-height: 26px; }
.fields dd { line-height: 26px; }
.actions { display: flex; gap: 20px; margin-top: 22px; }
.btn {
  display: flex;
  align-items: center;
  height: 48px;
  padding: 0 20px 0 10px;
  border: 0;
  border-radius: 5px;
  background: #f06044;
  color: #fff;
}
.btn-soft { background: #ef674c; }
.btn-icon {
  display: flex;
  align-items: center;
  justify-content: center;
  width: 46px;
  height: 48px;
  margin-right: 2px;
  background: rgba(255, 255, 255, .1);
}

/* Map */
.map { position: relative; height: 524px; margin-top: 31px; overflow: hidden; }
.map-canvas { width: 100%; height: 100%; }
.sea, .water { fill: #aad3df; }
.land { fill: #f2efe9; }
.bord, .reg, .mar { fill: none; vector-effect: non-scaling-stroke; stroke-linejoin: round; }
.bord { stroke: #c9b0c8; stroke-width: 2px; }
.reg { stroke: #dccbd9; stroke-width: 1.5px; }
.mar, .mar circle { fill: none; stroke: #9fa8c6; stroke-width: 2px; vector-effect: non-scaling-stroke; }
.seam { stroke: #fff; stroke-width: 1px; }
.wide { stroke-width: 2px; }
.seam-h { stroke: #fff; stroke-width: 1px; opacity: .25; }
.map text {
  font-family: "Noto Sans", "DejaVu Sans", "Noto Sans CJK SC", sans-serif;
  font-size: 14px;
  text-anchor: middle;
  paint-order: stroke;
  stroke: rgba(255, 255, 255, .6);
  stroke-width: 3px;
  stroke-linejoin: round;
}
.map .start { text-anchor: start; }
.map .country text { fill: #8d618b; font-size: 15px; }
.city text { fill: #444; }

.zoom {
  position: absolute;
  top: 14px;
  left: 14px;
  border: 1px solid rgba(0, 0, 0, .35);
  border-radius: 5px;
  overflow: hidden;
}
.zoom button {
  display: flex;
  align-items: center;
  justify-content: center;
  width: 40px;
  height: 39px;
  padding: 5px 0 0;
  border: 0;
  background: #fff;
}
.zoom button + button { height: 40px; border-top: 1px solid #ccc; }
.attribution {
  position: absolute;
  right: 0;
  bottom: 0;
  padding: 0 5px;
  background: rgba(255, 255, 255, .8);
  color: #333;
  font: 16px/21px "Liberation Sans", Arial, sans-serif;
}
.attribution a { color: #0078a8; }
.attribution svg { display: inline-block; }

.charts { display: grid; grid-template-columns: 1fr 1fr; gap: 32px; padding-top: 129px; }
.charts h2 { color: #495057; font-size: 25px; font-weight: 600; line-height: 32px; text-align: center; }
```
